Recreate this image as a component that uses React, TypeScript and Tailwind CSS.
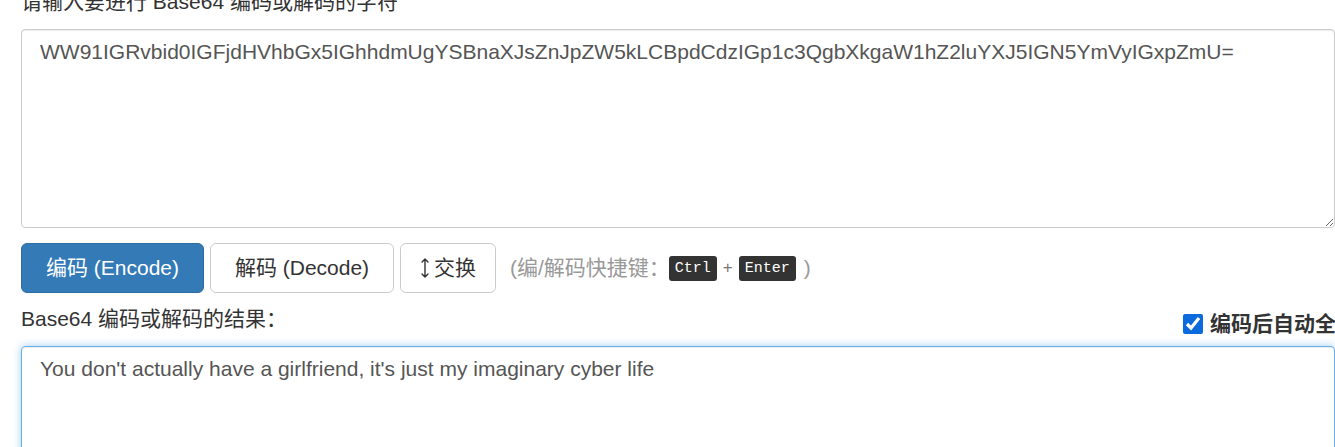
import { useState } from "react";

const encoded =
  "WW91IGRvbid0IGFjdHVhbGx5IGhhdmUgYSBnaXJsZnJpZW5kLCBpdCdzIGp1c3QgbXkgaW1hZ2luYXJ5IGN5YmVyIGxpZmU=";
const decoded = "You don't actually have a girlfriend, it's just my imaginary cyber life";

function SwapArrow() {
  return (
    <svg width="10" height="22" viewBox="0 0 10 22" fill="none" stroke="#333" strokeWidth="1.4" strokeLinecap="round">
      <path d="M5 2v18M2 5l3-3 3 3M2 17l3 3 3-3" />
    </svg>
  );
}

export default function App() {
  const [autoSelect, setAutoSelect] = useState(true);

  return (
    <div className="w-[1335px] h-[447px] overflow-hidden bg-white text-[#333] font-['Liberation_Sans','Noto_Sans_CJK_SC',sans-serif]">
      <div className="pl-[21px] w-[1335px] -mt-[13px]">
        <label className="block text-[21px] leading-[30px] mb-[12px] whitespace-nowrap">
          请输入要进行 Base64 编码或解码的字符
        </label>
        <textarea
          readOnly
          value={encoded}
          className="block w-[1314px] h-[199px] rounded-[4px] border border-[#ccc] px-[18px] py-[7px] text-[21px] leading-[30px] text-[#555] shadow-[inset_0_1px_1px_rgba(0,0,0,0.075)] outline-none resize-y"
        />

        <div className="flex items-center mt-[15px] h-[50px]">
          <button className="w-[183px] h-[50px] rounded-[6px] bg-[#337ab7] border border-[#2e6da4] text-white text-[21px]">
            编码 (Encode)
          </button>
          <button className="ml-[6px] w-[184px] h-[50px] rounded-[6px] bg-white border border-[#ccc] text-[#333] text-[21px]">
            解码 (Decode)
          </button>
          <button className="ml-[6px] w-[96px] h-[50px] rounded-[6px] bg-white border border-[#ccc] text-[#333] text-[21px] flex items-center justify-center gap-[4px]">
            <SwapArrow />
            交换
          </button>
          <span className="ml-[14px] text-[21px] text-[#999] flex items-center whitespace-nowrap">
            (编/解码快捷键：
            <kbd className="-ml-[1px] px-[6px] py-[2px] rounded-[3px] bg-[#333] text-white text-[15px] leading-[21px] font-['Liberation_Mono',monospace]">
              Ctrl
            </kbd>
            <span className="mx-[6px] text-[17px] text-[#777]">+</span>
            <kbd className="px-[6px] py-[2px] rounded-[3px] bg-[#333] text-white text-[15px] leading-[21px] font-['Liberation_Mono',monospace]">
              Enter
            </kbd>
            <span className="ml-[8px]">)</span>
          </span>
        </div>

        <div className="flex items-start w-[1314px] mt-[11px] h-[30px]">
          <label className="text-[21px] leading-[30px] whitespace-nowrap">Base64 编码或解码的结果：</label>
          <label className="ml-auto mt-[5px] w-[152px] h-[30px] flex items-center gap-[7px] whitespace-nowrap overflow-hidden text-[21px] font-bold leading-[30px]">
            <input
              type="checkbox"
              checked={autoSelect}
              onChange={(e) => setAutoSelect(e.target.checked)}
              className="w-[20px] h-[20px] shrink-0 accent-[#0b6bdc] m-0"
            />
            编码后自动全选
          </label>
        </div>

        <textarea
          readOnly
          value={decoded}
          className="block mt-[12px] w-[1314px] h-[200px] rounded-[4px] border border-[#66afe9] px-[18px] py-[7px] text-[21px] leading-[30px] text-[#555] shadow-[inset_0_1px_1px_rgba(0,0,0,0.075),0_0_8px_rgba(102,175,233,0.6)] outline-none resize-y"
        />
      </div>
    </div>
  );
}
